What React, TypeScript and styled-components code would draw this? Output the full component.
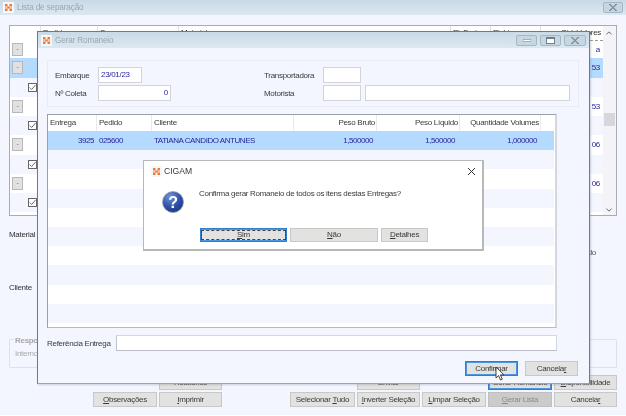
import React from "react";
import styled, { createGlobalStyle } from "styled-components";

const Global = createGlobalStyle`
  html, body { margin: 0; padding: 0; background: #fff; width: 626px; height: 416px; overflow: hidden; }
  body { font-family: "Liberation Sans", Arial, sans-serif; font-size: 8px; letter-spacing: -0.3px; color: #3a3a3a; }
  * { box-sizing: border-box; }
`;

const Screen = styled.div`
  position: relative;
  width: 626px;
  height: 416px;
  overflow: hidden;
  filter: blur(0.45px);
`;

const Win = styled.div`
  width: 626px;
  height: 415px;
  background: #f4f6ff;
  display: flex;
  flex-direction: column;
`;

const TitleBar = styled.div<{ $h: number }>`
  height: ${(p) => p.$h}px;
  flex: none;
  background: linear-gradient(#c9dae6, #dce8f0);
  display: flex;
  align-items: center;
  gap: 3px;
  padding: 0 3px;
  color: #98a6b0;
  font-size: 8.2px;
  letter-spacing: -0.15px;
`;

const TitleText = styled.span`
  flex: 1;
`;

const WinBtn = styled.span<{ $w: number }>`
  width: ${(p) => p.$w}px;
  height: 11px;
  border: 1px solid #a6b7c4;
  border-radius: 2px;
  background: #c6d6e2;
  display: flex;
  align-items: center;
  justify-content: center;
`;

const MainBody = styled.div`
  flex: 1;
  display: flex;
  flex-direction: column;
  padding: 10px 9px 0 9px;
`;

const MainGrid = styled.div`
  height: 191px;
  flex: none;
  border: 1px solid #a8acb3;
  background: #fff;
  display: grid;
  grid-template-columns: 1fr 13px;
  overflow: hidden;
`;

const GridInner = styled.div`
  display: flex;
  flex-direction: column;
  min-width: 0;
  min-height: 0;
  overflow: hidden;
`;

const MainHead = styled.div`
  height: 15px;
  flex: none;
  display: grid;
  grid-template-columns: 30px 57px 81px 272px 40px 50px 1fr;
  white-space: nowrap;
  color: #333;
`;

const HeadCell = styled.span<{ $end?: boolean }>`
  padding: 2px 2px 0;
  line-height: 10px;
  text-align: ${(p) => (p.$end ? "right" : "left")};
  border-left: 1px solid #e2e2e6;
  &:first-child { border-left: 0; }
  ${(p) => (p.$end ? "border-bottom: 1px dashed #9a9a9a;" : "")}
`;

const MainRow = styled.div<{ $kind: "sel" | "alt" | "plain" }>`
  height: 19.25px;
  flex: none;
  display: grid;
  grid-template-columns: 17px 14px 1fr auto;
  align-items: center;
  padding-right: 3px;
  color: #26269a;
  background: ${(p) => (p.$kind === "sel" ? "#b4daff" : p.$kind === "alt" ? "#f4f6ff" : "#fff")};
  &:nth-child(2) { height: 17.25px; }
`;

const TreeBtn = styled.span`
  grid-column: 1;
  margin-left: 2px;
  width: 11px;
  height: 13px;
  background: #e1e1e1;
  border: 1px solid #b8b8b8;
  color: #777;
  font-size: 7px;
  line-height: 10px;
  text-align: center;
`;

const Check = styled.span`
  grid-column: 2;
  margin-left: 1px;
  width: 9px;
  height: 9px;
  border: 1px solid #666;
  background: #fff;
  display: flex;
  align-items: center;
  justify-content: center;
`;

const RowValue = styled.span`
  grid-column: 4;
`;

const ScrollTrack = styled.div`
  background: #f4f4f8;
  display: flex;
  flex-direction: column;
  align-items: center;
  padding-top: 87px;
  position: relative;
`;

const ScrollArrow = styled.span<{ $down?: boolean }>`
  position: absolute;
  left: 3px;
  ${(p) => (p.$down ? "bottom: 3px;" : "top: 5px;")}
  width: 6px;
  height: 4px;
  display: flex;
`;

const ScrollThumb = styled.div`
  width: 11px;
  height: 13px;
  background: #d6d6dc;
`;

const InfoArea = styled.div`
  height: 159px;
  flex: none;
  display: flex;
  flex-direction: column;
  padding-top: 13px;
`;

const InfoLabel = styled.div<{ $gap: number }>`
  margin-top: ${(p) => p.$gap}px;
  line-height: 12px;
  color: #333;
`;

const InfoRight = styled.div`
  align-self: flex-end;
  margin-top: 6px;
  margin-right: 21px;
  line-height: 12px;
  color: #555;
`;

const Fieldset = styled.div`
  height: 29px;
  margin-top: 45px;
  border: 1px solid #dfe1ea;
  border-radius: 1px;
  padding: 9px 5px;
  color: #aaa;
  position: relative;
`;

const Legend = styled.span`
  position: absolute;
  top: -4px;
  left: 4px;
  padding: 0 1px;
  background: #f4f6ff;
  color: #a8a8a8;
  font-weight: 700;
`;

const ButtonGrid = styled.div`
  display: grid;
  grid-template-columns: 82px 64px 63px 64px 65px 63px 64px 64px 63px;
  grid-auto-rows: 15px;
  gap: 2px;
`;

const Btn = styled.button<{ $col?: number; $row?: number; $focus?: boolean; $off?: boolean; $w?: number; $h?: number }>`
  ${(p) => (p.$col ? `grid-column: ${p.$col};` : "")}
  ${(p) => (p.$row ? `grid-row: ${p.$row};` : "")}
  ${(p) => (p.$w ? `width: ${p.$w}px; flex: none;` : "")}
  height: ${(p) => p.$h ?? 15}px;
  margin: 0;
  padding: 0;
  font: inherit;
  letter-spacing: inherit;
  line-height: 1;
  white-space: nowrap;
  background: ${(p) => (p.$off ? "#cbcbcb" : "#e2e2e0")};
  color: ${(p) => (p.$off ? "#8b8b8b" : "#3a3a3a")};
  border: 1px solid ${(p) => (p.$focus ? "#2b80d6" : p.$off ? "#bfbfbf" : "#c8c8c8")};
  box-shadow: ${(p) => (p.$focus ? "inset 0 0 0 1px #4a96e0" : "none")};
`;

const Dialog = styled.div`
  position: absolute;
  left: 37px;
  top: 31px;
  width: 553px;
  height: 353px;
  background: #f4f6ff;
  border: 1px solid #6f7a85;
  border-color: #6f7a85 #6f7a85 #9aa4ad #6f7a85;
  box-shadow: 1px 1px 2px rgba(120, 130, 140, 0.35);
  display: flex;
  flex-direction: column;
`;

const DialogBody = styled.div`
  flex: 1;
  display: flex;
  flex-direction: column;
  padding: 12px 10px 0 9px;
`;

const Panel = styled.div`
  height: 47px;
  flex: none;
  border: 1px solid #e9ebf4;
  padding: 6px 0 0 7px;
  display: grid;
  grid-template-columns: 43px 73px 93px 59px 38px 4px 205px;
  grid-template-rows: 16px 16px;
  row-gap: 2px;
  align-items: center;
`;

const FieldLabel = styled.span<{ $col: number }>`
  grid-column: ${(p) => p.$col};
  color: #3a3a3a;
  white-space: nowrap;
`;

const Field = styled.span<{ $col: number; $w?: number; $end?: boolean }>`
  grid-column: ${(p) => p.$col};
  width: ${(p) => (p.$w ? `${p.$w}px` : "100%")};
  height: 16px;
  background: #fff;
  border: 1px solid #d2d4dc;
  color: #26269a;
  padding: 0 2px;
  line-height: 14px;
  text-align: ${(p) => (p.$end ? "right" : "left")};
`;

const TableWrap = styled.div`
  height: 214px;
  width: 510px;
  flex: none;
  margin-top: 7px;
  background: #fff;
  border: 1px solid #a8adb4;
  border-width: 1px 2px 1px 1px;
  border-color: #9aa0a8 #d5d7de #b6bac1 #9aa0a8;
`;

const tableCols = "49px 55px 142px 83px 83px 81px 1fr";

const TableHead = styled.div`
  height: 16px;
  display: grid;
  grid-template-columns: ${tableCols};
  align-items: stretch;
`;

const ThCell = styled.span<{ $end?: boolean }>`
  padding: 0 ${(p) => (p.$end ? 1 : 2)}px 0 2px;
  line-height: 16px;
  text-align: ${(p) => (p.$end ? "right" : "left")};
  border-right: 1px solid #eaeaee;
  color: #3a3a3a;
  white-space: nowrap;
`;

const TableRow = styled.div<{ $kind: "sel" | "alt" | "plain" }>`
  height: 19.2px;
  display: grid;
  grid-template-columns: ${tableCols};
  align-items: center;
  color: #26269a;
  margin-right: 1px;
  background: ${(p) => (p.$kind === "sel" ? "#b4daff" : p.$kind === "alt" ? "#f4f6ff" : "#fff")};
`;

const TdCell = styled.span<{ $end?: boolean; $pad: number }>`
  padding: 0 ${(p) => (p.$end ? p.$pad : 2)}px 0 2px;
  text-align: ${(p) => (p.$end ? "right" : "left")};
  white-space: nowrap;
  letter-spacing: -0.45px;
`;

const RefRow = styled.div`
  margin-top: 7px;
  width: 510px;
  display: flex;
  align-items: center;
  height: 16px;
`;

const RefLabel = styled.span`
  width: 69px;
  color: #3a3a3a;
  white-space: nowrap;
`;

const RefInput = styled.span`
  flex: 1;
  height: 16px;
  background: #fff;
  border: 1px solid #c9ccd6;
  border-color: #d5d7e0 #d5d7e0 #b9bcc6 #c0c3ce;
`;

const DialogActions = styled.div`
  margin-top: 10px;
  margin-right: 1px;
  display: flex;
  justify-content: flex-end;
  gap: 7px;
`;

const MsgBox = styled.div`
  position: absolute;
  left: 143px;
  top: 160px;
  width: 341px;
  height: 91px;
  background: #fff;
  border: 1px solid #b8b8b8;
  border-width: 1px 2px 2px 1px;
  display: flex;
  flex-direction: column;
`;

const MsgHead = styled.div`
  height: 20px;
  flex: none;
  display: flex;
  align-items: center;
  gap: 2px;
  padding: 0 6px 0 7px;
  font-size: 8.6px;
  letter-spacing: 0;
  color: #3a3a3a;
`;

const MsgMain = styled.div`
  height: 47px;
  flex: none;
  display: flex;
  align-items: flex-start;
  padding-left: 18px;
  gap: 15px;
`;

const MsgIcon = styled.svg`
  flex: none;
  margin-top: 10px;
`;

const MsgText = styled.span`
  color: #3a3a3a;
  line-height: 12px;
  margin-top: 7px;
  white-space: nowrap;
`;

const MsgActions = styled.div`
  display: flex;
  gap: 3px;
  padding-left: 56px;
`;

const Dotted = styled.span`
  display: block;
  border: 1px dashed #444;
  margin: 0;
  height: 10px;
  line-height: 8px;
`;

const Cursor = styled.svg`
  position: absolute;
  left: 495px;
  top: 366px;
`;

const Logo = () => (
  <svg width="11" height="11" viewBox="0 0 11 11" style={{ flex: "none" }}>
    <rect width="11" height="11" fill="#f7f7f7" />
    <path d="M2 2h2.5v2.5H2zM6.5 2H9v2.5H6.5zM4.2 4.5h2.6V6.5H4.2zM2 6.5h2.5V9H2zM6.5 6.5H9V9H6.5z" fill="#ee7a3a" />
    <path d="M2 4.8h1.5v1.4H2zM7.5 4.8H9v1.4H7.5z" fill="#f5b48c" />
  </svg>
);

const XGlyph = () => (
  <svg width="10" height="7" viewBox="0 0 10 7">
    <path d="M2 .5L8 6.5M8 .5L2 6.5" stroke="#7b8c9b" strokeWidth="1.1" fill="none" />
    <path d="M1 .5h2M7 .5h2M1 6.5h2M7 6.5h2" stroke="#7b8c9b" strokeWidth="1" />
  </svg>
);

const CheckMark = () => (
  <svg width="8" height="7" viewBox="0 0 8 7">
    <path d="M.8 3.5L3 5.8 7.4.8" stroke="#666" strokeWidth="1.1" fill="none" />
  </svg>
);

const Question = () => (
  <MsgIcon width="22" height="22" viewBox="0 0 22 22">
    <defs>
      <radialGradient id="q" cx="0.35" cy="0.25" r="0.9">
        <stop offset="0" stopColor="#6f93d8" />
        <stop offset="0.55" stopColor="#2c4fa8" />
        <stop offset="1" stopColor="#17306f" />
      </radialGradient>
    </defs>
    <circle cx="11" cy="11" r="10.5" fill="url(#q)" stroke="#9aa3b3" strokeWidth="0.8" />
    <text x="11" y="16.5" textAnchor="middle" fontFamily="Liberation Sans, sans-serif" fontWeight="700" fontSize="16" fill="#fff">?</text>
  </MsgIcon>
);

const mainRows: { kind: "sel" | "alt" | "plain"; tree?: string; check?: boolean; value?: string }[] = [
  { kind: "plain", tree: "-", value: "a" },
  { kind: "sel", tree: "-", value: "53" },
  { kind: "alt", check: true },
  { kind: "plain", tree: "-", value: "53" },
  { kind: "alt", check: true },
  { kind: "plain", tree: "-", value: "06" },
  { kind: "alt", check: true },
  { kind: "plain", tree: "-", value: "06" },
  { kind: "alt", check: true },
  { kind: "plain", tree: " " },
];

const tableKinds: ("sel" | "alt" | "plain")[] = ["sel", "alt", "plain", "alt", "plain", "alt", "plain", "alt", "plain", "alt"];

export default function App() {
  return (
    <>
      <Global />
      <Screen>
        <Win>
          <TitleBar $h={15}>
            <Logo />
            <TitleText>Lista de separação</TitleText>
            <WinBtn $w={20}><XGlyph /></WinBtn>
          </TitleBar>
          <MainBody>
            <MainGrid>
              <GridInner>
                <MainHead>
                  <HeadCell />
                  <HeadCell>Pedido</HeadCell>
                  <HeadCell>Seq</HeadCell>
                  <HeadCell>Material</HeadCell>
                  <HeadCell>Pi. Bruto</HeadCell>
                  <HeadCell>Pi. Liq</HeadCell>
                  <HeadCell $end>Qtd. Valores</HeadCell>
                </MainHead>
                {mainRows.map((r, i) => (
                  <MainRow key={i} $kind={r.kind}>
                    {r.tree && <TreeBtn>{r.tree}</TreeBtn>}
                    {r.check && <Check><CheckMark /></Check>}
                    {r.value && <RowValue>{r.value}</RowValue>}
                  </MainRow>
                ))}
              </GridInner>
              <ScrollTrack>
                <ScrollArrow>
                  <svg width="7" height="4" viewBox="0 0 7 4"><path d="M.5 3.5L3.5.7 6.5 3.5" stroke="#555" fill="none" /></svg>
                </ScrollArrow>
                <ScrollThumb />
                <ScrollArrow $down>
                  <svg width="7" height="4" viewBox="0 0 7 4"><path d="M.5.5L3.5 3.3 6.5.5" stroke="#555" fill="none" /></svg>
                </ScrollArrow>
              </ScrollTrack>
            </MainGrid>
            <InfoArea>
              <InfoLabel $gap={0}>Material</InfoLabel>
              <InfoRight>Peso Líquido</InfoRight>
              <InfoLabel $gap={23}>Cliente</InfoLabel>
              <Fieldset>
                <Legend>Responsável</Legend>
                Interno
              </Fieldset>
            </InfoArea>
            <ButtonGrid>
              <Btn $col={3} $row={1}>Relatórios</Btn>
              <Btn $col={6} $row={1}>Enviar</Btn>
              <Btn $col={8} $row={1} $focus>Gerar Romaneio</Btn>
              <Btn $col={9} $row={1}><u>D</u>isponibilidade</Btn>
              <Btn $col={2} $row={2}><u>O</u>bservações</Btn>
              <Btn $col={3} $row={2}><u>I</u>mprimir</Btn>
              <Btn $col={5} $row={2}>Selecionar <u>T</u>udo</Btn>
              <Btn $col={6} $row={2}><u>I</u>nverter Seleção</Btn>
              <Btn $col={7} $row={2}><u>L</u>impar Seleção</Btn>
              <Btn $col={8} $row={2} $off><u>G</u>erar Lista</Btn>
              <Btn $col={9} $row={2}>Cancela<u>r</u></Btn>
            </ButtonGrid>
          </MainBody>
        </Win>

        <Dialog>
          <TitleBar $h={16}>
            <Logo />
            <TitleText>Gerar Romaneio</TitleText>
            <WinBtn $w={21}>
              <svg width="8" height="3" viewBox="0 0 8 3"><rect width="8" height="2.4" y="0.3" fill="#fff" stroke="#7b8c9b" strokeWidth="0.7" /></svg>
            </WinBtn>
            <WinBtn $w={21}>
              <svg width="9" height="7" viewBox="0 0 9 7"><rect x="0.5" y="0.5" width="8" height="6" fill="#fff" stroke="#6d7f8f" /><rect x="0.5" y="0.5" width="8" height="1.5" fill="#6d7f8f" /></svg>
            </WinBtn>
            <WinBtn $w={22}><XGlyph /></WinBtn>
          </TitleBar>
          <DialogBody>
            <Panel>
              <FieldLabel $col={1}>Embarque</FieldLabel>
              <Field $col={2} $w={44}>23/01/23</Field>
              <FieldLabel $col={4}>Transportadora</FieldLabel>
              <Field $col={5} />
              <FieldLabel $col={1}>Nº Coleta</FieldLabel>
              <Field $col={2} $end>0</Field>
              <FieldLabel $col={4}>Motorista</FieldLabel>
              <Field $col={5} />
              <Field $col={7} />
            </Panel>
            <TableWrap>
              <TableHead>
                <ThCell>Entrega</ThCell>
                <ThCell>Pedido</ThCell>
                <ThCell>Cliente</ThCell>
                <ThCell $end>Peso Bruto</ThCell>
                <ThCell $end>Peso Líquido</ThCell>
                <ThCell $end>Quantidade Volumes</ThCell>
              </TableHead>
              {tableKinds.map((k, i) => (
                <TableRow key={i} $kind={k}>
                  {i === 0 && (
                    <>
                      <TdCell $end $pad={3}>3925</TdCell>
                      <TdCell $pad={2}>025600</TdCell>
                      <TdCell $pad={2}>TATIANA CANDIDO ANTUNES</TdCell>
                      <TdCell $end $pad={4}>1,500000</TdCell>
                      <TdCell $end $pad={5}>1,500000</TdCell>
                      <TdCell $end $pad={4}>1,000000</TdCell>
                    </>
                  )}
                </TableRow>
              ))}
            </TableWrap>
            <RefRow>
              <RefLabel>Referência Entrega</RefLabel>
              <RefInput />
            </RefRow>
            <DialogActions>
              <Btn $w={53} $focus>Confirmar</Btn>
              <Btn $w={53}>Cancela<u>r</u></Btn>
            </DialogActions>
          </DialogBody>
        </Dialog>

        <MsgBox>
          <MsgHead>
            <Logo />
            <TitleText>CIGAM</TitleText>
            <svg width="9" height="9" viewBox="0 0 9 9"><path d="M1 1L8 8M8 1L1 8" stroke="#333" strokeWidth="1" fill="none" /></svg>
          </MsgHead>
          <MsgMain>
            <Question />
            <MsgText>Confirma gerar Romaneio de todos os itens destas Entregas?</MsgText>
          </MsgMain>
          <MsgActions>
            <Btn $w={87} $h={14} $focus><Dotted><u>S</u>im</Dotted></Btn>
            <Btn $w={88} $h={14}><u>N</u>ão</Btn>
            <Btn $w={47} $h={14}><u>D</u>etalhes</Btn>
          </MsgActions>
        </MsgBox>

        <Cursor width="10" height="15" viewBox="0 0 10 15">
          <path d="M1 1v11l2.6-2.4 1.9 4.4 1.8-.8-1.9-4.3H9z" fill="#fff" stroke="#333" strokeWidth="0.9" />
        </Cursor>
      </Screen>
    </>
  );
}
